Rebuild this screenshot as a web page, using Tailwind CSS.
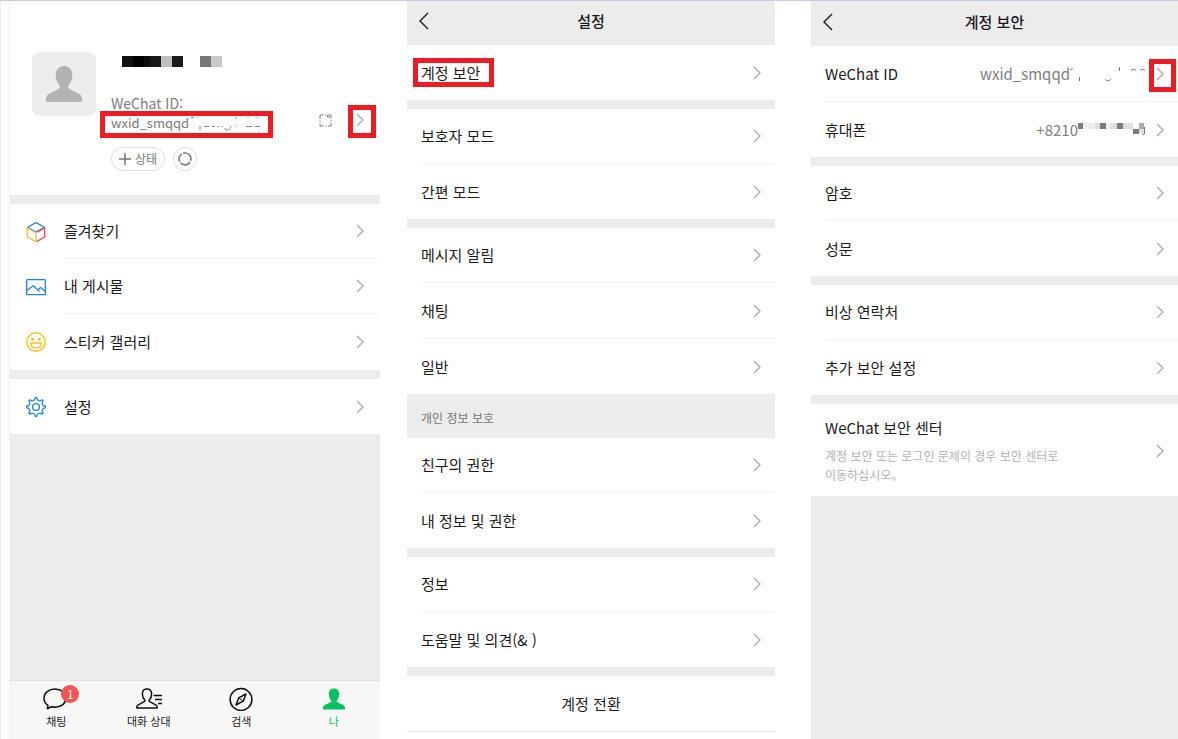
<!DOCTYPE html>
<html lang="ko">
  <head>
    <meta charset="UTF-8" />
    <meta name="viewport" content="width=device-width, initial-scale=1.0" />
    <title>WeChat 계정 보안</title>
    <script src="https://cdn.jsdelivr.net/npm/@tailwindcss/browser@4"></script>
  </head>
  <body class="bg-white font-['Noto_Sans_CJK_KR',sans-serif] text-[15px] leading-5 text-[#1a1a1a]">
    <!-- shared icons -->
    <svg class="hidden" xmlns="http://www.w3.org/2000/svg">
      <symbol id="chevron" viewBox="0 0 8 14">
        <path d="M1 1l6 6-6 6" fill="none" stroke="#b0b0b0" stroke-width="1.5" />
      </symbol>
      <symbol id="back" viewBox="0 0 10 18">
        <path d="M9 1L1 9l8 8" fill="none" stroke="#222" stroke-width="1.5" />
      </symbol>
    </svg>

    <div class="grid min-h-screen grid-cols-[370fr_368fr_376fr] gap-x-[27px] border-t border-[#c3cce0] border-l border-l-[#ececec] pl-[9px]">
      <!-- Me -->
      <section class="flex flex-col border-l border-[#f3f3f3] -ml-px">
        <div class="flex gap-[15px] pt-[51px] pb-6 pl-[22px]">
          <div class="flex size-16 shrink-0 items-center justify-center rounded-lg bg-[#ededed]">
            <svg class="h-9 w-9" viewBox="0 0 36 36" fill="#b3b3b3">
              <path d="M18 0c5 0 8.300 3.600 8.300 9 0 4.300-1.500 8-3.900 10.500-.7.800-.6 2.300.4 2.900l10.200 5.600c2 1.200 3 2.600 3 4.700v1.800c0 1-.6 1.500-1.500 1.500h-33C.6 36 0 35.500 0 34.500v-1.800C0 30.600 1 29.200 3 28l10.200-5.600c1-.6 1.100-2.100.4-2.900C11.200 17 9.700 13.300 9.700 9c0-5.400 3.300-9 8.300-9z" />
            </svg>
          </div>
          <div class="flex-1 pt-1">
            <!-- blurred nickname -->
            <svg class="ml-[11px] h-[11px] w-[100px]" viewBox="0 0 100 11" shape-rendering="crispEdges">
              <path fill="#101010" d="M0 0h11v11H0z" />
              <path fill="#000" d="M11 0h11v11H11z" />
              <path fill="#0c0c0c" d="M22 0h6v11h-6z" />
              <path fill="#181818" d="M28 0h11v11H28z" />
              <path fill="#c0c0c0" d="M39 0h11v11H39z" />
              <path fill="#1c1c1c" d="M50 0h11v11H50z" />
              <path fill="#777" d="M78 0h11v11H78z" />
              <path fill="#c8c8c8" d="M89 0h11v11H89z" />
            </svg>
            <div class="mt-[26px] flex items-end text-[14px] text-[#7a7a7a]">
              <div class="flex-1">
                <div>WeChat ID:</div>
                <div class="relative flex text-[13px]">
                  wxid_smqqd
                  <svg class="h-5 w-[72px]" viewBox="0 0 72 20" fill="none" stroke="#8a8a8a" stroke-width="1">
                    <path d="M2 5l3-1M11 13v4M15 13.500h5M23 13.500h3M29 13.500h1M33 13.500h1M36 15c0 3 5 3 6-2M47 4v2M47 13h1M57 13.500h6M66 13.500h5" />
                    <path stroke="#d5d5d5" d="M8 4.500h2M57 4.500h5M66 4.500h5" />
                  </svg>
                  <span class="pointer-events-none absolute -top-0.5 -left-[11px] h-[27px] w-[173px] border-5 border-[#ed1c24]"></span>
                </div>
              </div>
              <a href="#" class="flex items-center gap-6 pr-4 pb-1.5" aria-label="프로필">
                <svg class="size-[13px]" viewBox="0 0 13 13" fill="none" stroke="#7d7d7d">
                  <path d="M1 5V1h3.500M6 1h1M8.500 3V1H12v3.500M12 6v1M12 8.500V12H9M7.500 12h-1M4.500 12H1V9.500M1 8V6.500M8.500 3H11" />
                </svg>
                <span class="relative">
                  <svg class="h-3.5 w-2"><use href="#chevron" /></svg>
                  <span class="pointer-events-none absolute -top-2 -left-2 h-[33px] w-7 border-5 border-[#ed1c24]"></span>
                </span>
              </a>
            </div>
            <div class="mt-3.5 flex gap-2">
              <button class="flex h-6 w-[54px] items-center justify-center gap-1 rounded-full border border-[#dedede] text-[12px] text-[#777]">
                <svg class="size-3" viewBox="0 0 12 12" stroke="#777" stroke-width="1.500"><path d="M6 0v12M0 6h12" /></svg>
                상태
              </button>
              <button class="flex size-6 items-center justify-center rounded-full border border-[#dedede]" aria-label="친구 상태">
                <svg class="size-3.5" viewBox="0 0 14 14" fill="none" stroke="#808080" stroke-width="1.700">
                  <path d="M5 1.400a5.900 5.900 0 0 1 7.600 7.400M12 10a5.900 5.900 0 0 1-9.600.8M1.700 9.600a5.900 5.900 0 0 1 2.200-7.700" />
                </svg>
              </button>
            </div>
          </div>
        </div>

        <nav class="flex flex-col gap-[9px] border-y-9 border-[#ececec] bg-[#ececec] border-b-0">
          <div class="bg-white">
            <a href="#" class="flex h-[55px] items-center gap-4.5 pl-4">
              <svg class="size-5" viewBox="0 0 20 20" fill="none" stroke-width="1.300" stroke-linejoin="round">
                <path stroke="#2a86e0" d="M1.500 5.200L10 .6l8.500 4.600L10 10z" />
                <path stroke="#ee4b52" d="M18.700 6v9l-8.200 4.600" />
                <path stroke="#ee4b52" d="M11.500 10.200l7.200-4.200" />
                <path stroke="#f5bd35" d="M1.300 6v9l8.700 4.700V11M1.300 6l7.500 4.200" />
              </svg>
              <span class="flex h-full flex-1 items-center justify-between border-b border-[#f3f3f3] pr-4">
                즐겨찾기
                <svg class="h-3.5 w-2"><use href="#chevron" /></svg>
              </span>
            </a>
            <a href="#" class="flex h-[55px] items-center gap-4.5 pl-4">
              <svg class="size-5" viewBox="0 0 20 20" fill="none" stroke="#2483dc" stroke-width="1.300" stroke-linejoin="round">
                <rect x=".7" y="2.700" width="18.600" height="15" rx=".6" />
                <path d="M.7 13.500l6.600-4.800 6.200 5.800M11.800 12.800l2.800-2.300 4.700 3.700" />
              </svg>
              <span class="flex h-full flex-1 items-center justify-between border-b border-[#f3f3f3] pr-4">
                내 게시물
                <svg class="h-3.5 w-2"><use href="#chevron" /></svg>
              </span>
            </a>
            <a href="#" class="flex h-14 items-center gap-4.5 pl-4">
              <svg class="size-5" viewBox="0 0 20 20" fill="none" stroke="#f4c21c" stroke-width="1.400" stroke-linejoin="round">
                <circle cx="10" cy="10" r="9.200" />
                <path d="M4.800 11h10.400c0 3-2 4.900-5.200 4.900S4.800 14 4.800 11z" />
                <circle cx="6.600" cy="7.200" r="1.500" fill="#f4c21c" stroke="none" />
                <circle cx="13.400" cy="7.200" r="1.500" fill="#f4c21c" stroke="none" />
              </svg>
              <span class="flex h-full flex-1 items-center justify-between pr-4">
                스티커 갤러리
                <svg class="h-3.5 w-2"><use href="#chevron" /></svg>
              </span>
            </a>
          </div>
          <a href="#" class="flex h-[55px] items-center gap-4.5 bg-white pl-4">
            <svg class="size-5" viewBox="0 0 20 20" fill="none" stroke="#2483dc" stroke-width="1.300" stroke-linejoin="round">
              <path d="M8.600 2.900L9.200.7h1.600l.6 2.200 2.600 1.100 2-1.200 1.200 1.200-1.200 2 1.100 2.600 2.200.6v1.600l-2.200.6-1.100 2.600 1.200 2-1.200 1.200-2-1.200-2.600 1.100-.6 2.200H9.200l-.6-2.200L6 16l-2 1.200L2.800 16 4 14l-1.100-2.600-2.200-.6V9.200l2.200-.6L4 6 2.800 4 4 2.800 6 4z" />
              <circle cx="10" cy="10" r="3.400" />
            </svg>
            <span class="flex h-full flex-1 items-center justify-between pr-4">
              설정
              <svg class="h-3.5 w-2"><use href="#chevron" /></svg>
            </span>
          </a>
        </nav>

        <div class="flex-1 bg-[#ececec]"></div>

        <nav class="grid h-[59px] grid-cols-4 border-t border-[#e2e2e2] bg-[#f7f7f7] pt-1.5 text-[11px] leading-4">
          <a href="#" class="flex flex-col items-center gap-0.5">
            <span class="relative">
              <svg class="h-6 w-7" viewBox="0 0 28 24" fill="none" stroke="#111" stroke-width="1.500" stroke-linejoin="round">
                <path d="M13 2C6.600 2 2 6 2 11.200c0 3 1.500 5.500 4 7.200l-.7 3.300 4-1.900c1.200.3 2.400.5 3.700.5 6.400 0 11-4 11-9.100S19.400 2 13 2z" />
              </svg>
              <span class="absolute -top-0.5 left-[19px] flex size-[18px] items-center justify-center rounded-full bg-[#fa5151] text-[12px] text-white">1</span>
            </span>
            채팅
          </a>
          <a href="#" class="flex flex-col items-center gap-0.5">
            <svg class="h-6 w-7" viewBox="0 0 28 24" fill="none" stroke="#111" stroke-width="1.500" stroke-linejoin="round">
              <path d="M12 2c-2.800 0-4.600 2-4.600 4.900 0 2.500.8 4.400 2.200 5.900.5.600.4 1.400-.3 1.800l-6 3.300c-1 .6-1.500 1.300-1.500 2.300v.8h20.400v-.8c0-1-.5-1.700-1.500-2.300l-6-3.300c-.7-.4-.8-1.200-.3-1.800 1.400-1.500 2.200-3.400 2.200-5.900C16.600 4 14.800 2 12 2z" />
              <path d="M18.500 8.500H27M20 12.500h7M23 16.500h4" />
            </svg>
            대화 상대
          </a>
          <a href="#" class="flex flex-col items-center gap-0.5">
            <svg class="size-6" viewBox="0 0 24 24" fill="none" stroke="#111" stroke-width="1.500" stroke-linejoin="round">
              <circle cx="12" cy="12.500" r="10.900" />
              <path d="M17 7l-2.800 7.200L7 18l2.700-7.200z" />
              <path d="M9.700 10.800l4.500 3.400" stroke-width="1" />
            </svg>
            검색
          </a>
          <a href="#" class="flex flex-col items-center gap-0.5 text-[#07c160]">
            <svg class="size-6" viewBox="0 0 24 24" fill="#07c160">
              <path d="M12 1.500c3.200 0 5.200 2.200 5.200 5.500 0 2.600-1 4.900-2.400 6.400-.4.500-.4 1.200.2 1.500l6.200 3.200c1.200.7 1.800 1.500 1.800 2.800v.6c0 .6-.4 1-1 1H2c-.6 0-1-.4-1-1v-.6c0-1.300.6-2.100 1.800-2.800L9 14.900c.6-.3.600-1 .2-1.500C7.800 11.900 6.800 9.600 6.800 7c0-3.300 2-5.500 5.200-5.500z" />
            </svg>
            나
          </a>
        </nav>
      </section>

      <!-- Settings -->
      <section class="flex flex-col">
        <header class="grid h-11 grid-cols-[1fr_auto_1fr] items-center bg-[#ececec] px-3 pb-1">
          <button class="justify-self-start" aria-label="뒤로"><svg class="h-[18px] w-2.5"><use href="#back" /></svg></button>
          <h1 class="font-medium">설정</h1>
        </header>
        <a href="#" class="ml-3.5 flex h-[55px] items-center justify-between pr-3.5">
          <span class="relative">
            계정 보안
            <span class="pointer-events-none absolute -top-[5px] -left-2 h-[29px] w-[81px] border-5 border-[#ed1c24]"></span>
          </span>
          <svg class="h-3.5 w-2"><use href="#chevron" /></svg>
        </a>
        <div class="border-t-9 border-[#ececec] pl-3.5">
          <a href="#" class="flex h-[55px] items-center justify-between border-b border-[#f3f3f3] pr-3.5">
            보호자 모드
            <svg class="h-3.5 w-2"><use href="#chevron" /></svg>
          </a>
          <a href="#" class="flex h-[55px] items-center justify-between pr-3.5">
            간편 모드
            <svg class="h-3.5 w-2"><use href="#chevron" /></svg>
          </a>
        </div>
        <div class="border-t-9 border-[#ececec] pl-3.5">
          <a href="#" class="flex h-[55px] items-center justify-between border-b border-[#f3f3f3] pr-3.5">
            메시지 알림
            <svg class="h-3.5 w-2"><use href="#chevron" /></svg>
          </a>
          <a href="#" class="flex h-14 items-center justify-between border-b border-[#f3f3f3] pr-3.5">
            채팅
            <svg class="h-3.5 w-2"><use href="#chevron" /></svg>
          </a>
          <a href="#" class="flex h-[55px] items-center justify-between pr-3.5">
            일반
            <svg class="h-3.5 w-2"><use href="#chevron" /></svg>
          </a>
        </div>
        <h2 class="flex h-11 items-center bg-[#ececec] px-3.5 pt-1 text-[12px] text-[#777]">개인 정보 보호</h2>
        <div class="pl-3.5">
          <a href="#" class="flex h-[55px] items-center justify-between border-b border-[#f3f3f3] pr-3.5">
            친구의 권한
            <svg class="h-3.5 w-2"><use href="#chevron" /></svg>
          </a>
          <a href="#" class="flex h-[55px] items-center justify-between pr-3.5">
            내 정보 및 권한
            <svg class="h-3.5 w-2"><use href="#chevron" /></svg>
          </a>
        </div>
        <div class="border-y-9 border-[#ececec] pl-3.5">
          <a href="#" class="flex h-[55px] items-center justify-between border-b border-[#f3f3f3] pr-3.5">
            정보
            <svg class="h-3.5 w-2"><use href="#chevron" /></svg>
          </a>
          <a href="#" class="flex h-[55px] items-center justify-between pr-3.5">
            도움말 및 의견(&amp; )
            <svg class="h-3.5 w-2"><use href="#chevron" /></svg>
          </a>
        </div>
        <button class="h-14 border-b border-[#e6e6e6]">계정 전환</button>
      </section>

      <!-- Account security -->
      <section class="ml-[9px] flex flex-col">
        <header class="grid h-[45px] grid-cols-[1fr_auto_1fr] items-center bg-[#ececec] px-3 pb-1">
          <button class="justify-self-start" aria-label="뒤로"><svg class="h-[18px] w-2.5"><use href="#back" /></svg></button>
          <h1 class="font-medium">계정 보안</h1>
        </header>
        <div class="pl-3.5">
          <a href="#" class="flex h-14 items-center border-b border-[#f3f3f3] pr-3.5">
            <span class="flex-1">WeChat ID</span>
            <span class="flex text-[#808080]">
              wxid_smqqd
              <svg class="h-5 w-[76px]" viewBox="0 0 76 20" fill="none" stroke="#777" stroke-width="1">
                <path d="M0 6l3-1.500M9.500 13v4M35 15.500c1 2 5 2 6-1M49.500 3v4M61 6.500c1-1.500 4-1.500 5 0M70 6.500c1-1.500 4-1.500 5 0" />
              </svg>
            </span>
            <span class="relative ml-2.5">
              <svg class="h-3.5 w-2"><use href="#chevron" /></svg>
              <span class="pointer-events-none absolute -top-2 -left-[7px] h-[33px] w-[27px] border-5 border-[#ed1c24]"></span>
            </span>
          </a>
          <a href="#" class="flex h-[55px] items-center pr-3.5">
            <span class="flex-1">휴대폰</span>
            <span class="flex text-[#808080]">
              +8210
              <svg class="h-5 w-[68px]" viewBox="0 0 68 20" shape-rendering="crispEdges">
                <path fill="#7c7c7c" d="M0 3h5v6H0zM22 3h6v6h-6zM39 3h6v6h-6zM55 9h6v5h-6z" />
                <path fill="#efefef" d="M5 3h12v6H5zM28 3h5v6h-5z" />
                <path fill="#dedede" d="M17 3h5v6h-5zM33 3h6v6h-6zM45 3h10v6H45zM61 9h5v5h-5z" />
                <path fill="#aaa" d="M61 3h5v6h-5z" />
                <path fill="none" stroke="#777" d="M66.500 7v6l-1 2" />
              </svg>
            </span>
            <svg class="ml-2.5 h-3.5 w-2"><use href="#chevron" /></svg>
          </a>
        </div>
        <div class="border-t-9 border-[#ececec] pl-3.5">
          <a href="#" class="flex h-[55px] items-center justify-between border-b border-[#f3f3f3] pr-3.5">
            암호
            <svg class="h-3.5 w-2"><use href="#chevron" /></svg>
          </a>
          <a href="#" class="flex h-[55px] items-center justify-between pr-3.5">
            성문
            <svg class="h-3.5 w-2"><use href="#chevron" /></svg>
          </a>
        </div>
        <div class="border-t-9 border-[#ececec] pl-3.5">
          <a href="#" class="flex h-[55px] items-center justify-between border-b border-[#f3f3f3] pr-3.5">
            비상 연락처
            <svg class="h-3.5 w-2"><use href="#chevron" /></svg>
          </a>
          <a href="#" class="flex h-[55px] items-center justify-between pr-3.5">
            추가 보안 설정
            <svg class="h-3.5 w-2"><use href="#chevron" /></svg>
          </a>
        </div>
        <a href="#" class="flex items-center justify-between border-t-9 border-[#ececec] pt-3.5 pr-3.5 pb-3 pl-3.5">
          <span class="flex flex-col gap-2">
            <span>WeChat 보안 센터</span>
            <span class="text-[12px] leading-[19px] text-[#b2b2b2]">계정 보안 또는 로그인 문제의 경우 보안 센터로<br />이동하십시오。</span>
          </span>
          <svg class="h-3.5 w-2 shrink-0"><use href="#chevron" /></svg>
        </a>
        <div class="flex-1 bg-[#ececec]"></div>
      </section>
    </div>
  </body>
</html>
